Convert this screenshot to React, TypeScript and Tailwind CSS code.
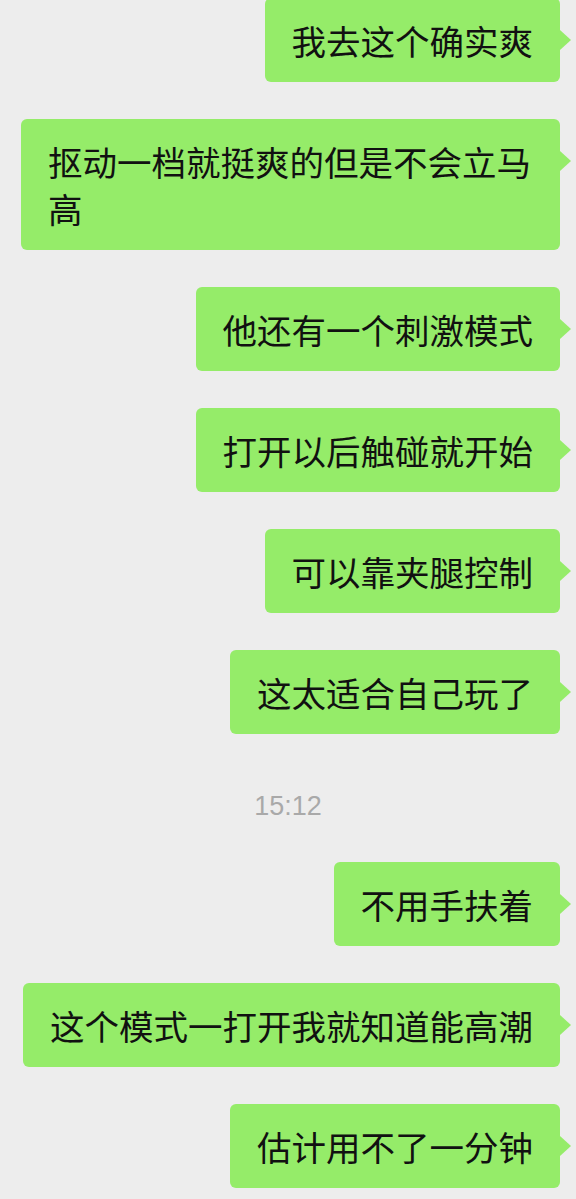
const messages: { text: string; time?: string }[] = [
  { text: "我去这个确实爽" },
  { text: "抠动一档就挺爽的但是不会立马高" },
  { text: "他还有一个刺激模式" },
  { text: "打开以后触碰就开始" },
  { text: "可以靠夹腿控制" },
  { text: "这太适合自己玩了" },
  { time: "15:12", text: "不用手扶着" },
  { text: "这个模式一打开我就知道能高潮" },
  { text: "估计用不了一分钟" },
];

function Bubble({ text }: { text: string }) {
  return (
    <div className="flex justify-end pl-[21px] pr-[16px]">
      <div className="relative max-w-[539px] rounded-[6px] bg-[#95ec69] pb-[18px] pl-[27px] pr-[27px] pt-[19px] text-[34.5px] leading-[47px] text-[#111]">
        {text}
        <span
          aria-hidden="true"
          className="absolute left-full top-[32px] h-0 w-0 border-y-[10px] border-l-[11px] border-y-transparent border-l-[#95ec69]"
        />
      </div>
    </div>
  );
}

export default function App() {
  return (
    <div
      className="h-[1199px] w-[576px] overflow-hidden bg-[#ededed]"
      style={{ fontFamily: '"Noto Sans CJK SC", "Noto Sans", sans-serif' }}
    >
      <div className="-mt-[2px] flex flex-col gap-[37px]">
        {messages.map((m) => (
          <div key={m.text} className="flex flex-col">
            {m.time && (
              <div
                className="mb-[41px] mt-[20px] text-center text-[27px] leading-[30px] text-[#a9a9a9]"
                style={{ fontFamily: '"Liberation Sans", Arial, sans-serif' }}
              >
                {m.time}
              </div>
            )}
            <Bubble text={m.text} />
          </div>
        ))}
      </div>
    </div>
  );
}
